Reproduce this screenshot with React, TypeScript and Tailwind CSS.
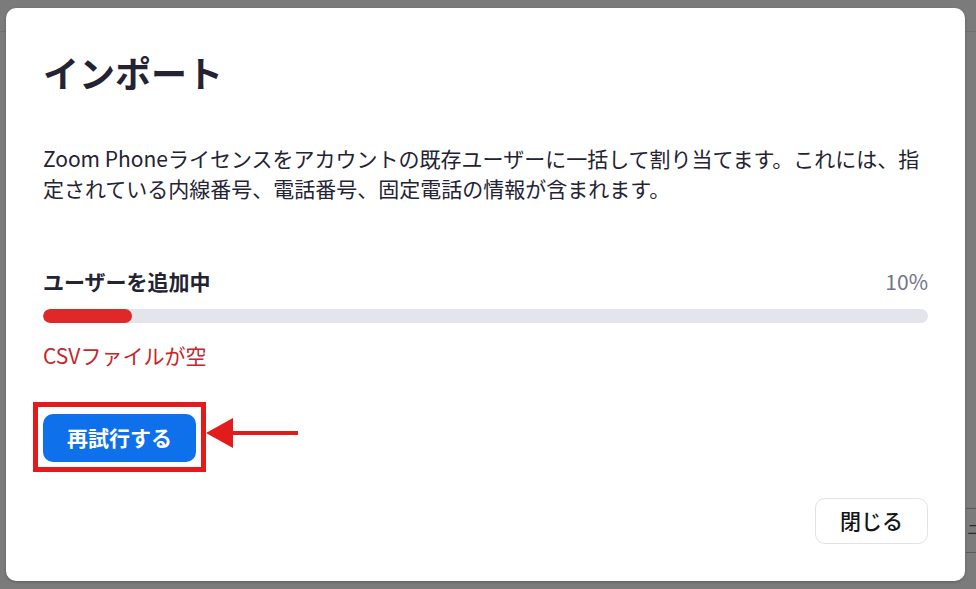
import React from 'react';

const font = { fontFamily: '"Noto Sans CJK JP", "Noto Sans", sans-serif' };

const App = () => {
  const progress = 10;

  return (
    <div className="relative w-[976px] h-[589px] overflow-hidden bg-[#7b7b7b]" style={font}>
      {/* faint page behind the overlay */}
      <div className="absolute left-0 right-0 top-[31px] h-px bg-[#6f6f6f]" />
      <div className="absolute left-[966px] right-0 top-[508px] h-px bg-[#5a5a5a]" />
      <div className="absolute left-[966px] right-0 top-[552px] h-px bg-[#5a5a5a]" />
      <div className="absolute left-[967px] top-[518px] text-[14px] leading-[20px] text-[#2a2a2a]">ニ</div>

      <div className="relative ml-[6px] mt-[8px] w-[959px] h-[573px] bg-white rounded-[10px] shadow-[0_1px_3px_rgba(0,0,0,0.25)] px-[37px] pt-[42px] flex flex-col text-[#232333]">
        <h1 className="text-[36px] leading-[44px] font-bold">インポート</h1>

        <p className="mt-[49px] text-[21px] leading-[30px] text-[#232333]">
          Zoom Phoneライセンスをアカウントの既存ユーザーに一括して割り当てます。これには、指定されている内線番号、電話番号、固定電話の情報が含まれます。
        </p>

        <div className="mt-[63px] flex items-center justify-between text-[21px] leading-[30px]">
          <span className="font-bold">ユーザーを追加中</span>
          <span className="text-[#747487]">{progress}%</span>
        </div>

        <div className="mt-[13px] h-[14px] rounded-full bg-[#e4e4ed] overflow-hidden">
          <div className="h-full rounded-full bg-[#e02828]" style={{ width: `${progress}%` }} />
        </div>

        <p className="mt-[17px] text-[21px] leading-[30px] text-[#c4262b]">CSVファイルが空</p>

        <div className="mt-[44px] flex">
          <button className="h-[48px] w-[153px] rounded-[10px] bg-[#0e71eb] text-white text-[21px] font-bold">
            再試行する
          </button>
        </div>

        <div className="mt-[36px] flex justify-end">
          <button className="h-[46px] w-[113px] rounded-[10px] border border-[#dfe3e8] bg-white text-[21px] font-medium text-[#131619]">
            閉じる
          </button>
        </div>
      </div>

      {/* annotation: highlight box and arrow */}
      <div className="absolute left-[33px] top-[402px] w-[173px] h-[70px] border-[5px] border-[#e21b1b]" />
      <svg className="absolute left-[200px] top-[415px]" width="104" height="36" viewBox="0 0 104 36">
        <rect x="28" y="16" width="70" height="4" fill="#e21b1b" />
        <polygon points="6,18 33,3 33,33" fill="#e21b1b" />
      </svg>
    </div>
  );
};

export default App;
